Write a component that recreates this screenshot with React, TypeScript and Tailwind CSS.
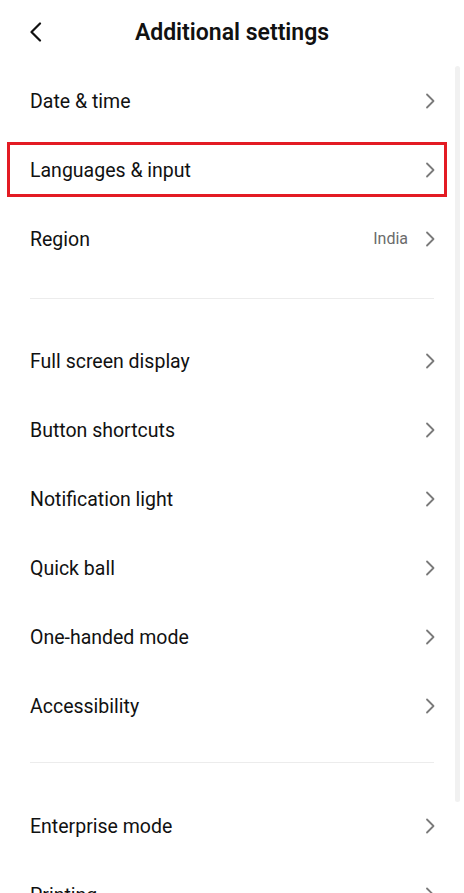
import React from 'react';

const Chevron = () => (
  <svg width="10" height="16" viewBox="0 0 10 16" className="shrink-0">
    <path d="M2 1.5 L8.5 8 L2 14.5" fill="none" stroke="#7a7a7a" strokeWidth="1.8" strokeLinecap="round" strokeLinejoin="round" />
  </svg>
);

interface RowProps {
  label: string;
  value?: string;
  highlighted?: boolean;
}

const Row: React.FC<RowProps> = ({ label, value, highlighted }) => (
  <div className="relative h-[69px] flex items-center justify-between pl-[30px] pr-[29px]">
    <span className="text-[19.5px] text-[#111] pt-[2px]">{label}</span>
    <div className="flex items-center gap-[17px]">
      {value && <span className="text-[16px] text-[#6b6b6b] pt-[1px]">{value}</span>}
      <Chevron />
    </div>
    {highlighted && (
      <div className="absolute left-[7px] right-[17px] top-[7px] bottom-[7px] border-[3px] border-[#e31b23] pointer-events-none" />
    )}
  </div>
);

const Divider = ({ tight }: { tight?: boolean }) => (
  <div className={tight ? 'pt-[22px] pb-[28px] px-[30px]' : 'pt-[25px] pb-[27px] px-[30px]'}>
    <div className="h-px bg-[#ececec]" />
  </div>
);

export default function App() {
  return (
    <div className="relative w-[464px] h-[893px] overflow-hidden bg-white" style={{ fontFamily: 'Roboto, "Noto Sans", sans-serif' }}>
      <header className="h-[66px] flex items-center relative">
        <div className="absolute left-[29px] top-[22px]">
          <svg width="14" height="20" viewBox="0 0 14 20">
            <path d="M11 1.5 L2.5 10 L11 18.5" fill="none" stroke="#111" strokeWidth="2.2" strokeLinecap="round" strokeLinejoin="round" />
          </svg>
        </div>
        <h1 className="w-full text-center text-[23px] font-semibold text-[#111]">Additional settings</h1>
      </header>

      <Row label="Date & time" />
      <Row label="Languages & input" highlighted />
      <Row label="Region" value="India" />
      <Divider />
      <Row label="Full screen display" />
      <Row label="Button shortcuts" />
      <Row label="Notification light" />
      <Row label="Quick ball" />
      <Row label="One-handed mode" />
      <Row label="Accessibility" />
      <Divider tight />
      <Row label="Enterprise mode" />
      <Row label="Printing" />

      <div className="absolute right-[4px] top-[66px] w-[5px] h-[736px] bg-[#f1f1f1] rounded-full" />
    </div>
  );
}
